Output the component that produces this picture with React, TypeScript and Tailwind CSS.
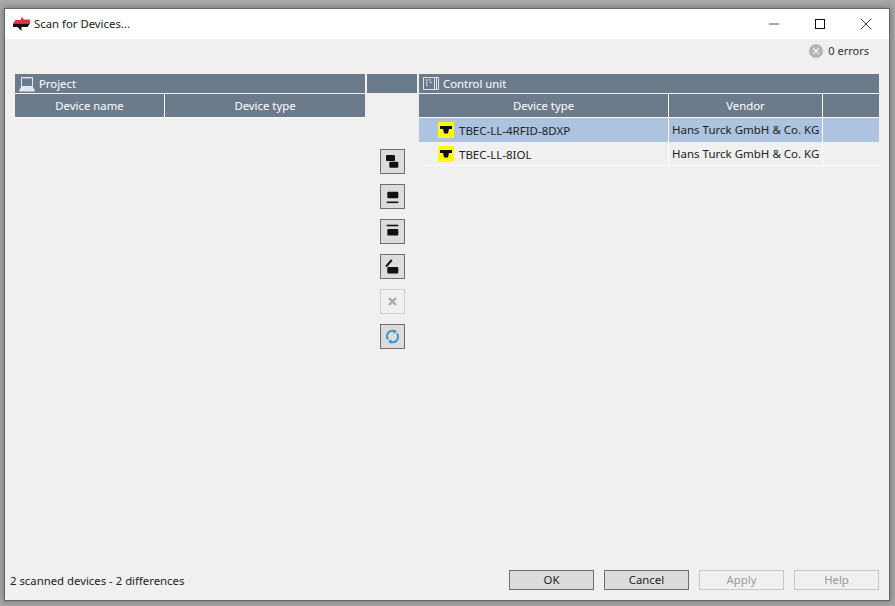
import { Minus, X } from 'lucide-react';
import type { ReactNode } from 'react';

const FONT = "font-['Noto_Sans','Open_Sans',sans-serif]";
const TEXT = 'text-[11.35px]';

function ScanIcon() {
  return (
    <svg width="17" height="14" viewBox="0 0 17 14" className="shrink-0">
      <path d="M8 0 L11.5 2.5 H17 V6.5 H0 L2.5 3 H8 Z" fill="#e2333f" />
      <path d="M0 6.5 H17 L14.5 10 H8.5 V14 L4.5 10 H0 Z" fill="#111" />
    </svg>
  );
}

function ProjectIcon() {
  return (
    <svg width="16" height="16" viewBox="0 0 16 16" className="shrink-0" fill="none" stroke="#e4e8ec">
      <path d="M2.5 1.5 H13.5 V10.5 H2.5 Z" />
      <path d="M3.5 2.5 H12.5" strokeOpacity="0.4" />
      <path d="M0.5 15 L2 11.5 H14 L15.5 15 Z" fill="#e4e8ec" />
    </svg>
  );
}

function ControlIcon() {
  return (
    <svg width="16" height="13" viewBox="0 0 16 13" className="shrink-0" fill="none" stroke="#dfe3e7">
      <path d="M0.5 0.5 H15.5 V12.5 H0.5 Z" />
      <path d="M11.5 1 V12 M13.5 1 V12" />
      <path d="M3 3 H4.5 M6 3 H7.5 M3 5.5 H4.5 M7 5.5 H8.5 M3 8 H4.5" strokeWidth="1.5" />
    </svg>
  );
}

function TurckIcon() {
  return (
    <span className="flex h-[16px] w-[16px] items-center justify-center rounded-[1px] bg-[#ffff00]">
      <svg width="12" height="8" viewBox="0 0 12 8">
        <path d="M0 0 H12 V3 H9 L8 7.5 H4 L3 3 H0 Z" fill="#111" />
      </svg>
    </span>
  );
}

function Blob({ x, y, w, h }: { x: number; y: number; w: number; h: number }) {
  return <rect x={x} y={y} width={w} height={h} rx="1" fill="#111" />;
}

function ToolButton({ children, disabled }: { children: ReactNode; disabled?: boolean }) {
  return (
    <div
      className={
        disabled
          ? 'flex h-[25px] w-[25px] items-center justify-center border border-[#cfcfcf] bg-[#f0f0f0]'
          : 'flex h-[25px] w-[25px] items-center justify-center border border-[#6f6f6f] bg-[#dcdcdc]'
      }
    >
      <svg width="15" height="15" viewBox="0 0 15 15">
        {children}
      </svg>
    </div>
  );
}

function DialogButton({ label, disabled }: { label: string; disabled?: boolean }) {
  return (
    <div
      className={
        disabled
          ? `flex h-[20px] w-[85px] items-center justify-center border border-[#c8c8c8] ${TEXT} text-[#9a9a9a]`
          : `flex h-[20px] w-[85px] items-center justify-center border border-[#6f6f6f] bg-[#dcdcdc] ${TEXT} text-[#222]`
      }
    >
      {label}
    </div>
  );
}

function Row({ name, selected }: { name: string; selected?: boolean }) {
  return (
    <div className={selected ? 'flex h-[24px] bg-[#adc3df]' : 'flex h-[24px] border-b border-[#fbfbfb]'}>
      <div className="flex w-[249px] items-center gap-[5px] pl-[19px] text-[11.5px] text-[#222]">
        <TurckIcon />
        <span className="pt-[2px]">{name}</span>
      </div>
      <div className="flex w-[155px] items-center whitespace-nowrap border-x border-[#fbfbfb] pl-[3px] text-[11.5px] text-[#222]">
        Hans Turck GmbH &amp; Co. KG
      </div>
      <div className="flex-1" />
    </div>
  );
}

export default function App() {
  return (
    <div className={`h-[606px] w-[895px] overflow-hidden bg-[#a8a8a8] pl-[5px] pt-[9px] ${FONT}`}>
      <div className="flex h-[591px] w-[884px] flex-col bg-[#f0f0f0] shadow-[0_0_0_1px_#666,0_0_6px_2px_#777]">
        <div className={`flex h-[30px] items-center bg-white pl-[8px] ${TEXT} text-[#222]`}>
          <ScanIcon />
          <span className="ml-[4px]">Scan for Devices...</span>
          <div className="ml-auto flex items-center">
            <div className="flex w-[46px] justify-center">
              <Minus size={16} strokeWidth={1.1} color="#111" />
            </div>
            <div className="flex w-[46px] justify-center">
              <span className="h-[10px] w-[10px] border border-[#111]" />
            </div>
            <div className="flex w-[46px] justify-center">
              <X size={20} strokeWidth={1} color="#111" />
            </div>
          </div>
        </div>

        <div className="flex h-[35px] items-start justify-end pr-[20px] pt-[4px]">
          <div className="flex items-center gap-[5px] text-[11px] leading-[16px] text-[#333]">
            <span className="flex h-[14px] w-[14px] items-center justify-center rounded-full bg-[#b4b4b4]">
              <X size={10} strokeWidth={3} color="#f0f0f0" />
            </span>
            0 errors
          </div>
        </div>

        <div className="flex flex-1 gap-[2px] pl-[10px]">
          <div className="w-[350px]">
            <div className={`flex h-[19px] items-center gap-[4px] bg-[#6c7b8c] pl-[4px] ${TEXT} text-white`}>
              <ProjectIcon />
              Project
            </div>
            <div className={`mt-px flex h-[24px] border-b border-[#fbfbfb] bg-[#6c7b8c] ${TEXT} text-white`}>
              <div className="flex w-[149px] items-center justify-center">Device name</div>
              <div className="flex flex-1 items-center justify-center border-l border-[#fbfbfb]">
                Device type
              </div>
            </div>
          </div>

          <div className="w-[50px]">
            <div className="h-[19px] bg-[#6c7b8c]" />
            <div className="ml-[13px] mt-[56px] flex flex-col gap-[10px]">
              <ToolButton>
                <Blob x={1} y={1} w={9} h={6} />
                <Blob x={4.3} y={7.7} w={9} h={6} />
              </ToolButton>
              <ToolButton>
                <Blob x={2.3} y={2.7} w={11} h={6.6} />
                <path d="M1.7 13.3 H13.3" stroke="#111" strokeWidth="1.6" />
              </ToolButton>
              <ToolButton>
                <path d="M1.7 1.5 H13.3" stroke="#111" strokeWidth="1.6" />
                <Blob x={2.3} y={5} w={11} h={6.6} />
              </ToolButton>
              <ToolButton>
                <path d="M1 7.7 L6.7 1" stroke="#111" strokeWidth="2" />
                <Blob x={2.3} y={8} w={11} h={6.4} />
              </ToolButton>
              <ToolButton disabled>
                <path d="M4 4 L11 11 M11 4 L4 11" stroke="#a9a9a9" strokeWidth="2.4" />
              </ToolButton>
              <ToolButton>
                <path d="M3 10.5 A5 5.5 0 0 1 9 2.2" fill="none" stroke="#3a97d4" strokeWidth="2" />
                <path d="M12 4.5 A5 5.5 0 0 1 6 12.8" fill="none" stroke="#3a97d4" strokeWidth="2" />
                <path d="M8.5 0 L12 2.5 L8.5 5 Z M6.5 10 L3 12.5 L6.5 15 Z" fill="#3a97d4" />
              </ToolButton>
            </div>
          </div>

          <div className="w-[460px]">
            <div className={`flex h-[19px] items-center gap-[4px] bg-[#6c7b8c] pl-[4px] ${TEXT} text-white`}>
              <ControlIcon />
              Control unit
            </div>
            <div className={`mt-px flex h-[24px] border-b border-[#fbfbfb] bg-[#6c7b8c] ${TEXT} text-white`}>
              <div className="flex w-[249px] items-center justify-center">Device type</div>
              <div className="flex w-[155px] items-center justify-center border-x border-[#fbfbfb]">
                Vendor
              </div>
              <div className="flex-1" />
            </div>
            <Row name="TBEC-LL-4RFID-8DXP" selected />
            <Row name="TBEC-LL-8IOL" />
          </div>
        </div>

        <div className="flex h-[30px] items-start pl-[5px] pr-[10px]">
          <span className={`pt-[2px] ${TEXT} text-[#222]`}>2 scanned devices - 2 differences</span>
          <div className="ml-auto flex gap-[10px]">
            <DialogButton label="OK" />
            <DialogButton label="Cancel" />
            <DialogButton label="Apply" disabled />
            <DialogButton label="Help" disabled />
          </div>
        </div>
      </div>
    </div>
  );
}
